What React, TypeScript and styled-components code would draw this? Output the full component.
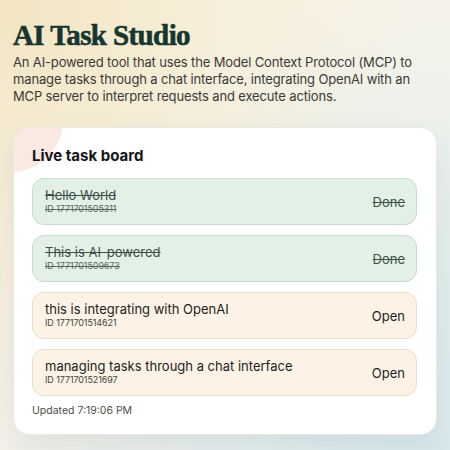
import React from "react";
import styled, { createGlobalStyle } from "styled-components";

const Global = createGlobalStyle`
  html, body { margin: 0; padding: 0; }
  body {
    width: 450px;
    height: 450px;
    overflow: hidden;
    font-family: "Inter", "Liberation Sans", sans-serif;
    background:
      radial-gradient(circle at 0% 0%, #f3e5c2 0%, rgba(246,236,210,0.6) 35%, rgba(250,246,236,0) 65%),
      radial-gradient(circle at 100% 100%, #d9eaee 0%, rgba(226,238,240,0.7) 40%, rgba(240,244,240,0) 75%),
      #f7f3e8;
  }
`;

const Page = styled.main`
  padding: 20px 13px 0 13px;
  display: flex;
  flex-direction: column;
`;

const Title = styled.h1`
  margin: 0;
  font-family: "Liberation Serif", "DejaVu Serif", serif;
  font-weight: 700;
  font-size: 29px;
  line-height: 30px;
  letter-spacing: -0.6px;
  color: #17362f;
  -webkit-text-stroke: 0.6px #17362f;
`;

const Intro = styled.p`
  margin: 4px 0 0 0;
  font-size: 13px;
  line-height: 17px;
  color: #3a3a36;
  letter-spacing: -0.15px;
`;

const Card = styled.section`
  position: relative;
  overflow: hidden;
  margin-top: 22px;
  background: #ffffff;
  border-radius: 16px;
  border: 1px solid #ece8df;
  box-shadow: 0 14px 30px rgba(80, 110, 120, 0.12);
  padding: 19px 19px 17px 18px;
  display: flex;
  flex-direction: column;
  &::before {
    content: "";
    position: absolute;
    left: -55px;
    top: -60px;
    width: 104px;
    height: 104px;
    border-radius: 50%;
    background: rgba(246, 214, 204, 0.55);
  }
`;

const CardTitle = styled.h2`
  position: relative;
  margin: 0 0 13px 0;
  font-size: 15px;
  line-height: 18px;
  font-weight: 700;
  color: #161616;
`;

const List = styled.div`
  position: relative;
  display: flex;
  flex-direction: column;
  gap: 10px;
`;

const Item = styled.div<{ $done: boolean }>`
  display: flex;
  align-items: center;
  justify-content: space-between;
  height: 47px;
  box-sizing: border-box;
  padding: 0 11px 0 12px;
  border-radius: 12px;
  border: 1px solid ${(p) => (p.$done ? "#c9dbd0" : "#ebdfcb")};
  background: ${(p) => (p.$done ? "#e3f0e6" : "#fcf3e6")};
  color: ${(p) => (p.$done ? "#3d5148" : "#1d1d1b")};
  text-decoration: ${(p) => (p.$done ? "line-through" : "none")};
`;

const ItemText = styled.div`
  display: flex;
  flex-direction: column;
`;

const ItemTitle = styled.span`
  font-size: 13px;
  line-height: 15px;
`;

const ItemId = styled.span`
  font-size: 9px;
  line-height: 12px;
  letter-spacing: -0.1px;
  opacity: 0.85;
`;

const Status = styled.span`
  font-size: 13px;
`;

const Footer = styled.div`
  position: relative;
  margin-top: 8px;
  font-size: 10.5px;
  color: #4e4e4a;
`;

const tasks = [
  { title: "Hello World", id: "1771701505311", done: true },
  { title: "This is AI-powered", id: "1771701509673", done: true },
  { title: "this is integrating with OpenAI", id: "1771701514621", done: false },
  { title: "managing tasks through a chat interface", id: "1771701521697", done: false },
];

export default function App() {
  return (
    <>
      <Global />
      <Page>
        <Title>AI Task Studio</Title>
        <Intro>
          An AI-powered tool that uses the Model Context Protocol (MCP) to manage tasks through a chat
          interface, integrating OpenAI with an MCP server to interpret requests and execute actions.
        </Intro>
        <Card>
          <CardTitle>Live task board</CardTitle>
          <List>
            {tasks.map((t) => (
              <Item key={t.id} $done={t.done}>
                <ItemText>
                  <ItemTitle>{t.title}</ItemTitle>
                  <ItemId>ID {t.id}</ItemId>
                </ItemText>
                <Status>{t.done ? "Done" : "Open"}</Status>
              </Item>
            ))}
          </List>
          <Footer>Updated 7:19:06 PM</Footer>
        </Card>
      </Page>
    </>
  );
}
